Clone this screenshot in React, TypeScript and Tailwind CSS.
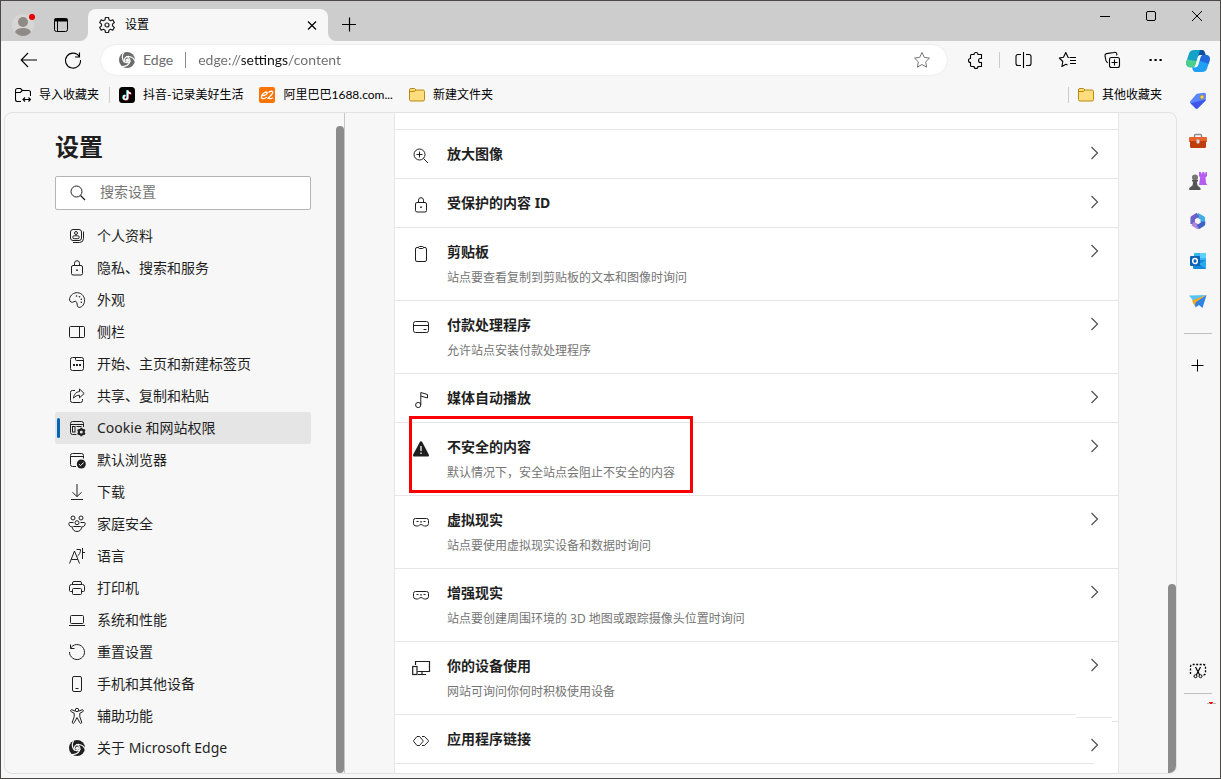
import { ReactNode } from "react";

type IconProps = {
    children: ReactNode
    className?: string
}

function Icon({ children, className = "" }: IconProps) {
    return (
        <svg viewBox="0 0 20 20" fill="none" stroke="currentColor" strokeWidth="1" aria-hidden="true" className={`size-5 shrink-0 ${className}`}>
            {children}
        </svg>
    )
}

function EdgeLogo({ cut }: { cut: string }) {
    return (
        <Icon>
            <circle cx="10" cy="10" r="8" fill="currentColor" stroke="none" />
            <g stroke={cut} strokeWidth="1.2">
                <circle cx="10.3" cy="10.3" r="1.8" fill={cut} stroke="none" />
                <path d="M7.400 12.500C6.200 9 8.600 6.200 12 6.500c2.800.3 5 2 6.200 4.800" />
                <path d="M7.400 12.500C6.200 9 8.600 6.200 12 6.500c2.800.3 5 2 6.200 4.800" transform="rotate(120 10 10)" />
                <path d="M7.400 12.500C6.200 9 8.600 6.200 12 6.500c2.800.3 5 2 6.200 4.800" transform="rotate(240 10 10)" />
            </g>
        </Icon>
    )
}

function LockIcon() {
    return (
        <Icon>
            <rect x="4.5" y="7.5" width="11" height="9.5" rx="1.5" />
            <path d="M7.5 7.5V5.2a2.5 2.5 0 0 1 5 0v2.3" />
            <circle cx="10" cy="12.2" r=".9" fill="currentColor" stroke="none" />
        </Icon>
    )
}

function GogglesIcon() {
    return (
        <Icon>
            <path d="M4.500 6.500h11a2 2 0 0 1 2 2v3a2.500 2.500 0 0 1-2.500 2.500h-1.500c-1.500 0-2-1.500-3.500-1.500S8 14 6.500 14H5a2.500 2.500 0 0 1-2.500-2.500v-3a2 2 0 0 1 2-2z" />
            <path d="M5.5 9.5h2M12.5 9.5h2M9 9.5l1 .8 1-.8" />
        </Icon>
    )
}

function ChevronIcon({ className = "" }: { className?: string }) {
    return (
        <Icon className={`text-[#555555] ${className}`}>
            <path d="M7.5 5l6 6-6 6" strokeWidth="1.3" />
        </Icon>
    )
}

function FolderIcon() {
    return (
        <svg viewBox="0 0 16 16" aria-hidden="true" className="size-4 shrink-0">
            <path d="M.5 3A1.500 1.500 0 0 1 2 1.500h3.500L7 3h7A1.500 1.500 0 0 1 15.500 4.500v8A1.500 1.500 0 0 1 14 14H2A1.500 1.500 0 0 1 .5 12.500z" fill="#ffdc7c" stroke="#b98a12" />
            <path d="M1 4.500h4.500L7 3" fill="#f5c02f" stroke="#b98a12" />
        </svg>
    )
}

const navItems = [
    {
        label: "个人资料",
        icon: (
            <Icon>
                <rect x="3.5" y="3.5" width="11" height="11" rx="2.5" />
                <path d="M16.5 5.5v7a4 4 0 0 1-4 4H6" />
                <circle cx="9" cy="7" r="1.5" />
                <rect x="5.8" y="9.8" width="6.4" height="2.9" rx="1.4" />
            </Icon>
        ),
    },
    { label: "隐私、搜索和服务", icon: <LockIcon /> },
    {
        label: "外观",
        icon: (
            <Icon>
                <path d="M2.6 8.6C3.4 5 6.8 2.4 10.6 2.7c4.600.4 7.400 4.300 6.900 8.600-.4 3.800-3.200 6.400-5.400 6.100-1.800-.2-1.800-1.800-2-3.400-.2-1.700-.8-2.900-2-2.800-.9.1-1.400 1-2.600 1.100-2.100.1-3.400-1.700-2.900-3.700z" />
                <g fill="currentColor" stroke="none">
                    <circle cx="9.5" cy="6" r=".8" />
                    <circle cx="12.5" cy="6.8" r=".8" />
                    <circle cx="14.3" cy="9.3" r=".8" />
                    <circle cx="14.3" cy="12.2" r=".8" />
                </g>
            </Icon>
        ),
    },
    {
        label: "侧栏",
        icon: (
            <Icon>
                <rect x="2.5" y="4.5" width="15" height="11" rx="1" />
                <path d="M12.5 4.5v11" />
            </Icon>
        ),
    },
    {
        label: "开始、主页和新建标签页",
        icon: (
            <Icon>
                <rect x="3.5" y="3.5" width="13" height="13" rx="2" />
                <path d="M8.5 3.5v2a1 1 0 0 0 1 1h7" />
                <path d="M6 11h2M9 11h2M12 11h2" strokeWidth="1.8" />
            </Icon>
        ),
    },
    {
        label: "共享、复制和粘贴",
        icon: (
            <Icon>
                <path d="M8 4.5H5.5a2 2 0 0 0-2 2v8a2 2 0 0 0 2 2h8a2 2 0 0 0 2-2v-1.5" />
                <path d="M12.5 3l4.7 4.5-4.7 4.300V9.300c-2.800 0-4.400.9-6 2.900.3-3.700 2.500-6.400 6-6.600z" strokeLinejoin="round" />
            </Icon>
        ),
    },
    {
        label: "Cookie 和网站权限",
        active: true,
        icon: (
            <Icon>
                <path d="M9.5 16.5h-4a2 2 0 0 1-2-2v-9a2 2 0 0 1 2-2h9a2 2 0 0 1 2 2V9M3.5 6.5h13M9.5 8.5h5" />
                <rect x="5.5" y="8.5" width="2.5" height="5.5" />
                <circle cx="14.3" cy="14" r="2.5" strokeWidth="2" />
                <path d="M14.3 9.7v1.800M14.3 16.5v1.800M10.6 11.8l1.500 1M16.5 15.2l1.500 1M10.6 16.2l1.500-1M16.5 12.8l1.500-1" strokeWidth="1.8" />
            </Icon>
        ),
    },
    {
        label: "默认浏览器",
        icon: (
            <Icon>
                <path d="M9 16.5H5.5a2 2 0 0 1-2-2v-9a2 2 0 0 1 2-2h9a2 2 0 0 1 2 2v3M3.5 6.5h13" />
                <circle cx="14.3" cy="14" r="4.5" fill="currentColor" stroke="none" />
                <path d="M12 14.2l1.600 1.500 3-3.200" stroke="#f7f7f7" />
            </Icon>
        ),
    },
    {
        label: "下载",
        icon: (
            <Icon>
                <path d="M10 2v12.500M5.5 10.2l4.500 4.500 4.500-4.500M4 17.5h12" />
            </Icon>
        ),
    },
    {
        label: "家庭安全",
        icon: (
            <Icon>
                <circle cx="6" cy="4" r="2" />
                <circle cx="14" cy="4" r="2" />
                <circle cx="10" cy="8.7" r="2" />
                <path d="M6.5 8.5H2.8a1 1 0 0 0-1 1c0 2 1.400 3.500 3.500 3.500M13.5 8.500h3.700a1 1 0 0 1 1 1c0 2-1.400 3.500-3.500 3.500" />
                <path d="M6.5 12.5h7a1 1 0 0 1 1 1c0 2.300-2 4-4.500 4s-4.500-1.700-4.500-4a1 1 0 0 1 1-1z" />
            </Icon>
        ),
    },
    {
        label: "语言",
        icon: (
            <Icon>
                <path d="M2.5 17.5L7.5 5l5 12.500M4.2 13.5h6.600" />
                <path d="M9.5 3.5h4c0 3-1 5-3 6.500M15.500 2v11M15.5 6.5H18" />
            </Icon>
        ),
    },
    {
        label: "打印机",
        icon: (
            <Icon>
                <path d="M5.5 6.5V5A1.500 1.500 0 0 1 7 3.5h6A1.500 1.500 0 0 1 14.5 5v1.500M5.5 13.5h-2a1 1 0 0 1-1-1v-4a2 2 0 0 1 2-2h11a2 2 0 0 1 2 2v4a1 1 0 0 1-1 1h-2" />
                <rect x="5.5" y="10.5" width="9" height="6" rx="1" />
            </Icon>
        ),
    },
    {
        label: "系统和性能",
        icon: (
            <Icon>
                <rect x="3.5" y="5.5" width="13" height="8" rx="1" />
                <path d="M2 15.5h16" />
            </Icon>
        ),
    },
    {
        label: "重置设置",
        icon: (
            <Icon>
                <path d="M3.5 2.5v4h4M3.5 6.3A7.500 7.500 0 1 1 2.5 10" />
            </Icon>
        ),
    },
    {
        label: "手机和其他设备",
        icon: (
            <Icon>
                <rect x="5.5" y="2.5" width="9" height="15" rx="1.5" />
                <path d="M8.5 14.5h3" />
            </Icon>
        ),
    },
    {
        label: "辅助功能",
        icon: (
            <Icon>
                <circle cx="10" cy="4" r="1.7" />
                <path d="M8.3 5.2L5 3.800c-1.300-.5-2 1.300-.8 1.900l3 1.500v3.600L5.300 16c-.4 1.300 1.300 1.900 1.900.7L10 11.500l2.800 5.200c.6 1.200 2.300.6 1.900-.7l-1.900-5.200V7.200l3-1.500c1.200-.6.5-2.400-.8-1.900l-3.300 1.400" />
            </Icon>
        ),
    },
    { label: "关于 Microsoft Edge", icon: <EdgeLogo cut="#f7f7f7" /> },
]

const permissions = [
    {
        title: "放大图像",
        icon: (
            <Icon>
                <circle cx="8.5" cy="8.5" r="5.5" />
                <path d="M12.5 12.5l4.500 4.500M5.5 8.500h6M8.500 5.500v6" />
            </Icon>
        ),
    },
    { title: "受保护的内容 ID", icon: <LockIcon /> },
    {
        title: "剪贴板",
        caption: "站点要查看复制到剪贴板的文本和图像时询问",
        icon: (
            <Icon>
                <rect x="4.5" y="3.5" width="11" height="14" rx="1.5" />
                <rect x="7.5" y="2.5" width="5" height="2" rx="1" fill="#ffffff" />
            </Icon>
        ),
    },
    {
        title: "付款处理程序",
        caption: "允许站点安装付款处理程序",
        icon: (
            <Icon>
                <rect x="2.5" y="4.5" width="15" height="11" rx="2" />
                <path d="M2.5 8.5h15M12.5 12.5h3" />
            </Icon>
        ),
    },
    {
        title: "媒体自动播放",
        icon: (
            <Icon>
                <circle cx="7.2" cy="15" r="2.6" />
                <path d="M9.8 15V2.500l6.700 2V8l-6.700-2" />
            </Icon>
        ),
    },
    {
        title: "不安全的内容",
        caption: "默认情况下，安全站点会阻止不安全的内容",
        marked: true,
        icon: (
            <Icon>
                <path d="M8.8 3c.5-.9 1.900-.9 2.400 0l6.700 12.700c.4.800-.2 1.800-1.100 1.800H3.200c-.9 0-1.500-1-1.100-1.800z" fill="currentColor" stroke="none" />
                <path d="M10 7v5M10 13.500v1.500" stroke="#ffffff" strokeWidth="1.3" />
            </Icon>
        ),
    },
    { title: "虚拟现实", caption: "站点要使用虚拟现实设备和数据时询问", icon: <GogglesIcon /> },
    { title: "增强现实", caption: "站点要创建周围环境的 3D 地图或跟踪摄像头位置时询问", icon: <GogglesIcon /> },
    {
        title: "你的设备使用",
        caption: "网站可询问你何时积极使用设备",
        icon: (
            <Icon>
                <path d="M4.5 7V3.500h14v10H6.500M7 16.5h8M11 13.5v3" strokeWidth="1.2" />
                <rect x="1.7" y="8.5" width="4.3" height="8" strokeWidth="1.2" />
            </Icon>
        ),
    },
    {
        title: "应用程序链接",
        last: true,
        icon: (
            <Icon>
                <path d="M6 5.500L2.800 9.300a1 1 0 0 0 0 1.400L6 14.500h2.500l3.300-3.800a1 1 0 0 0 0-1.400L8.500 5.500z" strokeLinejoin="round" />
                <path d="M11 5.500h2.500l3.700 3.800a1 1 0 0 1 0 1.400l-3.700 3.800H11" strokeLinejoin="round" />
            </Icon>
        ),
    },
]

const sideApps = [
    {
        name: "Copilot",
        icon: (
            <svg viewBox="0 0 24 24" aria-hidden="true" className="size-6">
                <path d="M8 1h8c2 0 2.500 1.500 3 3l.6 2H15c-2 0-2.700 1-3.200 2.500L9.500 16c-.5 1.600-1.500 2.200-3 2.200H4c-3 0-4.500-2.500-3.600-5.700L3 4.500C3.700 2.300 5.500 1 8 1z" fill="#13a3c9" />
                <path d="M1 10.500L.4 12.500C-.5 15.700 1 18.200 4 18.200h2.500c1.500 0 2.500-.6 3-2.200l1.200-4z" fill="#4bd08b" />
                <path d="M14 1h2c2 0 2.500 1.500 3 3l.6 2H15c-2 0-2.700 1-3.200 2.500z" fill="#0b4f9e" />
                <path d="M16 23H9.500c-2 0-2.500-1.500-3-3L6 18.200h3c2 0 2.700-1 3.200-2.500l2.300-7.500c.5-1.600 1.500-2.200 3-2.200H20c3 0 4.500 2.500 3.600 5.700L21 19.700c-.7 2.100-2.500 3.300-5 3.300z" fill="#1fa0f3" />
                <path d="M17 6h3c3 0 4.500 2.500 3.600 5.700l-.9 3-9.200-3 1-3.500C15 6.600 16 6 17 6z" fill="#2368dd" />
                <path d="M11.800 8.500c.4-1.300 1-2.200 2.400-2.400h2.300c-1.100.3-1.700 1-2 2.100l-2.300 7.500c-.4 1.400-1.100 2.300-2.600 2.500H7.500c1.100-.3 1.700-1 2-2.200z" fill="#f7f7f7" />
            </svg>
        ),
    },
    {
        name: "购物",
        icon: (
            <svg viewBox="0 0 20 20" aria-hidden="true" className="size-5">
                <path d="M9 2.800l7-1c1 0 2 .8 2 1.800l-.2 5c0 .6-.3 1-.7 1.400l-7.300 7.300c-.7.700-1.600.7-2.300 0l-5-5c-.7-.7-.7-1.700 0-2.400L8 3.500c.3-.4.6-.6 1-.7z" fill="#5a86ff" />
                <path d="M17.800 8.600c0 .6-.3 1-.7 1.400l-7.300 7.300c-.7.7-1.600.7-2.300 0l-5-5z" fill="#3f55ec" />
                <circle cx="14" cy="6" r="2" fill="#f7d154" stroke="#9b8a3c" strokeWidth=".7" />
            </svg>
        ),
    },
    {
        name: "工具",
        icon: (
            <svg viewBox="0 0 20 20" aria-hidden="true" className="size-5">
                <path d="M6.5 6V4.500a1 1 0 0 1 1-1h5a1 1 0 0 1 1 1V6" fill="none" stroke="#8d8d8d" strokeWidth="1.5" />
                <path d="M2 6h16a1 1 0 0 1 1 1v4H1V7a1 1 0 0 1 1-1z" fill="#e9632c" />
                <path d="M2 10h16v5.500a1.500 1.500 0 0 1-1.500 1.500h-13A1.500 1.500 0 0 1 2 15.500z" fill="#bf3c0e" />
                <rect x="8.5" y="8.5" width="3" height="4" rx="1" fill="#d9dde1" />
            </svg>
        ),
    },
    {
        name: "游戏",
        icon: (
            <svg viewBox="0 0 20 20" aria-hidden="true" className="size-5">
                <path d="M11 1h2v1.500h1.200V1h2.100v1.500h1.200V1H19v4l-1.500 1.500.5 5.500 1.200 2H11l1.200-7.500L11 5z" fill="#b65cf2" />
                <circle cx="7" cy="6.5" r="3" fill="#777777" />
                <path d="M4 9h6v1.500H8.800l.7 4L12.500 17v2H1.200v-2l3.300-2.500.7-4H4z" fill="#555555" />
            </svg>
        ),
    },
    {
        name: "Microsoft 365",
        icon: (
            <svg viewBox="0 0 20 20" fill="none" strokeWidth="4.5" strokeLinejoin="round" aria-hidden="true" className="size-5">
                <path d="M9 4l5.800 3.200v4" stroke="#42aee8" />
                <path d="M10 3.800L4.700 7v6" stroke="#6c62c8" />
                <path d="M4.700 12.500l5.300 3.400 2-1.200" stroke="#b183e0" />
                <path d="M15 10.500V13l-5 3" stroke="#3e62c6" />
            </svg>
        ),
    },
    {
        name: "Outlook",
        icon: (
            <svg viewBox="0 0 20 20" aria-hidden="true" className="size-5">
                <rect x="6" y="2" width="12" height="9" rx="1" fill="#38b6f1" />
                <path d="M12 2h5a1 1 0 0 1 1 1v4h-6z" fill="#5fd0fa" />
                <path d="M5 9h13v8a1 1 0 0 1-1 1H6a1 1 0 0 1-1-1z" fill="#1687d9" />
                <path d="M18 9v8.500L11 13z" fill="#2fa9ee" />
                <rect x="2" y="5" width="10" height="10" rx="1" fill="#0a63b6" />
                <ellipse cx="7" cy="10" rx="2.3" ry="2.6" fill="none" stroke="#ffffff" strokeWidth="1.5" />
            </svg>
        ),
    },
    {
        name: "Drop",
        icon: (
            <svg viewBox="0 0 20 20" aria-hidden="true" className="size-5">
                <path d="M1 4.500L18.500 4 5.500 10z" fill="#55c3f5" />
                <path d="M18.500 4l-4 13-3.500-3-3.500 2.500-1-5z" fill="#2e82e6" />
                <path d="M18.500 4L4 9.500 6.500 15l1.500-4z" fill="#f2a51d" />
            </svg>
        ),
    },
]

function TitleBar() {
    return (
        <header className="flex h-10 items-start justify-between bg-[#cdcdcd]">
            <div className="flex h-10 items-end">
                <div className="flex h-8 items-center gap-4 pl-2.5">
                    <button type="button" aria-label="用户" className="relative size-6">
                        <svg viewBox="0 0 24 24" aria-hidden="true" className="size-6">
                            <circle cx="12" cy="12" r="11" fill="#d8d6d2" />
                            <circle cx="12" cy="9" r="5" fill="#8e8b87" />
                            <path d="M4 19c1-2.700 3.500-4 8-4s7 1.300 8 4c-2 2.600-4.800 4-8 4s-6-1.400-8-4z" fill="#8e8b87" />
                        </svg>
                        <span className="absolute top-px right-0 size-1.5 rounded-full bg-[#e60000]" />
                    </button>
                    <button type="button" aria-label="标签页操作" className="text-black">
                        <Icon>
                            <rect x="3.5" y="3.5" width="13" height="13" rx="2" />
                            <path d="M3.5 5h13" strokeWidth="3" />
                            <path d="M6.5 5v11" />
                        </Icon>
                    </button>
                </div>
                <div className="relative ml-[17px] flex h-8 w-60 items-center rounded-t-lg bg-[#f7f7f7] pr-1.5 pl-[9px]">
                    <svg viewBox="0 0 8 8" aria-hidden="true" className="absolute bottom-0 -left-2 size-2">
                        <path d="M8 0v8H0a8 8 0 0 0 8-8z" fill="#f7f7f7" />
                    </svg>
                    <svg viewBox="0 0 8 8" aria-hidden="true" className="absolute -right-2 bottom-0 size-2">
                        <path d="M0 0v8h8a8 8 0 0 1-8-8z" fill="#f7f7f7" />
                    </svg>
                    <Icon>
                        <circle cx="10" cy="10" r="2" strokeWidth="1.2" />
                        <path d="M8.5 2.5h3l.5 2.300 1.500.9 2.300-.8 1.500 2.600-1.800 1.600v1.800l1.800 1.600-1.500 2.600-2.300-.8-1.500.9-.5 2.300h-3L8 15.200l-1.500-.9-2.300.8-1.500-2.600 1.800-1.600V9.100L2.700 7.500l1.500-2.600 2.300.8L8 4.800z" strokeLinejoin="round" strokeWidth="1.2" />
                    </Icon>
                    <span className="ml-2 flex-1 text-xs text-black">设置</span>
                    <button type="button" aria-label="关闭标签页" className="text-black">
                        <Icon><path d="M6 6.500l8 8M14 6.500l-8 8" strokeWidth="1.2" /></Icon>
                    </button>
                </div>
                <button type="button" aria-label="新建标签页" className="ml-[11px] flex h-8 items-center text-black">
                    <Icon><path d="M3 9.500h14M10.500 2.500v14" strokeWidth="1.2" /></Icon>
                </button>
            </div>
            <div className="flex text-black">
                <button type="button" aria-label="最小化" className="flex h-[30px] w-[46px] items-center justify-center">
                    <Icon><path d="M5 10.500h10" /></Icon>
                </button>
                <button type="button" aria-label="最大化" className="flex h-[30px] w-[46px] items-center justify-center">
                    <Icon><rect x="5.5" y="5.5" width="9" height="9" rx="1.5" /></Icon>
                </button>
                <button type="button" aria-label="关闭" className="flex h-[30px] w-[46px] items-center justify-center">
                    <Icon><path d="M5 5l10 10M15 5L5 15" /></Icon>
                </button>
            </div>
        </header>
    )
}

function ToolButton({ label, children }: { label: string, children: ReactNode }) {
    return (
        <button type="button" aria-label={label} className="flex h-8 w-11 shrink-0 items-center justify-center text-black">
            <Icon>{children}</Icon>
        </button>
    )
}

function Toolbar() {
    return (
        <div className="flex h-[38px] items-center pl-1.5">
            <ToolButton label="返回"><path d="M2.5 10H18M9 3l-6.800 7L9 17" strokeWidth="1.1" /></ToolButton>
            <ToolButton label="刷新"><path d="M16.5 2.500V7H12M16.300 6.500A7.500 7.500 0 1 0 17.500 10" strokeWidth="1.1" /></ToolButton>
            <div className="mr-[7px] ml-1.5 flex h-[30px] min-w-0 flex-1 items-center rounded-full bg-white pr-[15px] pl-4 font-['Lato','Noto_Sans_CJK_SC',sans-serif] text-[#6b6b6b] shadow-[0_0_2px_rgba(0,0,0,0.12)]">
                <EdgeLogo cut="#ffffff" />
                <label htmlFor="address" className="ml-1.5 text-sm">Edge</label>
                <span className="mx-3 h-4 w-px bg-[#8a8a8a]" />
                <input id="address" type="text" defaultValue="edge://settings/content" className="min-w-0 flex-1 bg-[linear-gradient(90deg,#6b6b6b_44px,#111111_44px,#111111_91px,#6b6b6b_91px)] bg-clip-text text-sm text-transparent outline-none" />
                <button type="button" aria-label="收藏此页" className="text-[#767676]">
                    <Icon><path d="M10 2.500l2.300 4.900 5.200.7-3.800 3.700.9 5.300-4.600-2.600-4.600 2.600.9-5.300-3.800-3.700 5.200-.7z" strokeLinejoin="round" /></Icon>
                </button>
            </div>
            <ToolButton label="扩展">
                <path d="M5.5 4.500H8a2 2 0 1 1 4 0h3.500v4h-1a2 2 0 1 0 0 4h1v4H12a2 2 0 1 1-4 0H5.500a1 1 0 0 1-1-1v-3a2 2 0 1 1 0-4v-3a1 1 0 0 1 1-1z" strokeWidth="1.1" />
            </ToolButton>
            <span className="mx-px h-4 w-px bg-[#cccccc]" />
            <ToolButton label="分屏">
                <path d="M8 4.500H5a2 2 0 0 0-2 2v7a2 2 0 0 0 2 2h3M13 4.500h3a2 2 0 0 1 2 2v7a2 2 0 0 1-2 2h-3M10.500 2v16" strokeWidth="1.1" />
            </ToolButton>
            <ToolButton label="收藏夹">
                <path d="M12.5 7.500L11 7.300 8.800 2.500 6.500 7.300l-4.200.7 3.500 3.500-.9 5 4-2.300 1.600.9M13 7.500h6M13 10.500h6M13 13.500h6" strokeWidth="1.1" strokeLinejoin="round" />
            </ToolButton>
            <ToolButton label="集锦">
                <rect x="8.5" y="7.5" width="10" height="10" rx="2" strokeWidth="1.1" />
                <path d="M13.5 9.500v6M10.500 12.500h6M15.500 5.500a2 2 0 0 0-2.500-3L5.500 3.600A2 2 0 0 0 4 5.900l.8 4.100c.2 1.200 1 2.300 2 2.800" strokeWidth="1.1" />
            </ToolButton>
            <ToolButton label="设置及其他">
                <path d="M4.5 10h2.200M9.500 10h2.200M14.500 10h2.200" strokeWidth="2.2" />
            </ToolButton>
        </div>
    )
}

function Bookmarks() {
    return (
        <nav className="flex h-[33px] items-center pr-[15px] pb-0.5 pl-3.5 font-['Lato','Noto_Sans_CJK_SC',sans-serif] text-xs whitespace-nowrap text-black">
            <a href="#import" className="flex items-center gap-2">
                <svg viewBox="0 0 16 16" fill="none" stroke="currentColor" strokeWidth="1.1" aria-hidden="true" className="size-4">
                    <path d="M6 14.500H2.500a2 2 0 0 1-2-2v-9a2 2 0 0 1 2-2h3l2 2h6a2 2 0 0 1 2 2V9M.5 5.500h4.800l2-2M8 12.500h7.500M10 10.500l-2 2 2 2M13.500 10.500l2 2-2 2" />
                </svg>
                导入收藏夹
            </a>
            <span className="mr-[9px] ml-2.5 h-4 w-px bg-[#cccccc]" />
            <a href="#douyin" className="flex items-center gap-2">
                <svg viewBox="0 0 16 16" fill="none" aria-hidden="true" className="size-4">
                    <rect width="16" height="16" rx="3.5" fill="#000000" />
                    <path d="M8 3v7.200a2 2 0 1 1-2-2M8 3.500c.3 1.700 1.500 2.700 3.500 2.800" stroke="#25f4ee" strokeWidth="1.6" />
                    <path d="M9.2 3.500v7.200a2 2 0 1 1-2-2M9.200 4c.3 1.700 1.500 2.700 3.300 2.800" stroke="#fe2c55" strokeWidth="1.6" />
                    <path d="M8.6 3.200v7.200a2 2 0 1 1-2-2M8.600 3.700c.3 1.700 1.500 2.700 3.400 2.800" stroke="#ffffff" strokeWidth="1.5" />
                </svg>
                抖音-记录美好生活
            </a>
            <a href="#1688" className="ml-4 flex items-center gap-2">
                <svg viewBox="0 0 16 16" fill="none" stroke="#ffffff" aria-hidden="true" className="size-4">
                    <rect width="16" height="16" rx="2" fill="#ff7300" stroke="none" />
                    <path d="M3 8.500c3 .2 5.500-1.200 5.200-3-.8-1.300-5 .5-5.700 4-.2 2.800 2.500 2.500 5.500.8M9.500 5.500c1.500-1.500 4.300-1.800 4.300-.2 0 1.700-2.300 3.400-4.800 6 1.500.8 3.200.4 5-.6" strokeWidth="1.3" />
                </svg>
                阿里巴巴1688.com...
            </a>
            <a href="#new-folder" className="ml-4 flex items-center gap-2"><FolderIcon />新建文件夹</a>
            <span className="ml-auto h-4 w-px bg-[#cccccc]" />
            <a href="#other" className="ml-[9px] flex items-center gap-2"><FolderIcon />其他收藏夹</a>
        </nav>
    )
}

function SettingsNav() {
    return (
        <aside className="flex w-[340px] shrink-0 justify-between border-r border-[#c6c6c6] pl-[50px]">
            <div className="w-64">
                <h1 className="mt-[18px] text-2xl leading-8 font-bold">设置</h1>
                <div className="mt-[13px] flex h-[34px] items-center gap-3 rounded-xs border border-[#b5b5b5] bg-white pl-3">
                    <label htmlFor="search" aria-label="搜索设置">
                        <Icon><circle cx="8.5" cy="8.5" r="5.5" /><path d="M12.5 12.500l4.500 4.500" strokeWidth="1.2" /></Icon>
                    </label>
                    <input id="search" type="search" placeholder="搜索设置" className="min-w-0 flex-1 pb-0.5 text-sm outline-none placeholder:text-[#757575]" />
                </div>
                <ul className="mt-2.5">
                    {navItems.map((item) => (
                        <li key={item.label}>
                            <a href="#settings" className={item.active ? "relative flex h-8 items-center gap-2.5 rounded-xs bg-[#e5e5e5] pl-3 text-sm" : "flex h-8 items-center gap-2.5 pl-3 text-sm"}>
                                {item.active && <span className="absolute inset-y-1.5 left-0.5 w-[3px] rounded-full bg-[#0067b8]" />}
                                {item.icon}
                                {item.label}
                            </a>
                        </li>
                    ))}
                </ul>
            </div>
            <div className="mt-[13px] w-2 rounded-full bg-[#8b8b8b]" />
        </aside>
    )
}

function PermissionList() {
    return (
        <main className="flex min-w-0 flex-1 items-start">
            <div className="mx-[49px] min-w-0 flex-1 border-x border-[#e6e6e6] bg-white pt-4 pb-8">
                {permissions.map((item) => (
                    <section key={item.title} className="relative">
                        {item.last ? (
                            <div className="flex h-px">
                                <span className="h-px flex-1 bg-[#e6e6e6]" />
                                <span className="mt-[3px] h-px w-9 bg-[#e6e6e6]" />
                                <span className="mt-[7px] h-px w-1.5 bg-[#e6e6e6]" />
                            </div>
                        ) : (
                            <div className="h-px bg-[#e6e6e6]" />
                        )}
                        <button type="button" className={`flex w-full items-start gap-4 pt-3 pr-3.5 pl-4 text-left ${item.caption ? "pb-2" : "pb-3"}`}>
                            <span className="mt-1 -mb-1">{item.icon}</span>
                            <span className="flex min-w-0 flex-1 flex-col">
                                <span className="text-sm leading-6 font-bold">{item.title}</span>
                                {item.caption && <span className="text-xs leading-7 text-[#757575]">{item.caption}</span>}
                            </span>
                            <ChevronIcon className={item.last ? "mt-[7px] -mb-2" : ""} />
                        </button>
                        {item.marked && <span className="absolute -top-1.5 left-3.5 z-10 h-[77px] w-[284px] border-[3px] border-[#fa0000]" />}
                    </section>
                ))}
                <div className="mr-6 h-px bg-[#e6e6e6]" />
            </div>
            <div className="mt-[471px] w-2 self-stretch rounded-t-full bg-[#8b8b8b]" />
        </main>
    )
}

function Sidebar() {
    return (
        <aside className="flex w-[43px] shrink-0 flex-col items-center pr-0.5">
            {sideApps.map((app) => (
                <button key={app.name} type="button" aria-label={app.name} className="flex h-10 items-center">{app.icon}</button>
            ))}
            <hr className="my-3 w-7 border-[#c0c0c0]" />
            <button type="button" aria-label="自定义" className="flex h-10 items-center text-black">
                <Icon><path d="M3.5 9.500h12M9.500 3.500v12" /></Icon>
            </button>
            <button type="button" aria-label="屏幕截图" className="mt-auto text-black">
                <Icon>
                    <path d="M2.5 13V5.500a2 2 0 0 1 2-2h11a2 2 0 0 1 2 2V12a2 2 0 0 1-2 2" strokeWidth="1.3" strokeDasharray="2 1.5" />
                    <path d="M7.5 6l4.200 8M12.500 6l-4.200 8" strokeWidth="1.2" />
                    <circle cx="7.5" cy="15.2" r="1.5" />
                    <circle cx="12.5" cy="15.2" r="1.5" />
                </Icon>
            </button>
            <hr className="mt-3 w-7 border-[#c0c0c0]" />
            <svg viewBox="0 0 10 3" aria-hidden="true" className="mt-2 mr-0.5 mb-[73px] h-[3px] w-2.5 shrink-0 self-end">
                <path d="M1 1.500h9" stroke="#b8b8b8" />
                <path d="M3 .5h4M4 1.500h2" stroke="#f01010" />
            </svg>
        </aside>
    )
}

export default function App() {
    return (
        <div className="flex h-screen w-full flex-col overflow-hidden border border-[#4d4848] bg-[#f7f7f7] font-['Noto_Sans','Noto_Sans_CJK_SC',sans-serif] text-[#1f1f1f]">
            <TitleBar />
            <div className="flex min-h-0 flex-1">
                <div className="flex min-w-0 flex-1 flex-col">
                    <Toolbar />
                    <Bookmarks />
                    <div className="mb-1 ml-[3px] flex min-h-0 flex-1 overflow-hidden rounded-lg border border-[#e2e2e2]">
                        <SettingsNav />
                        <PermissionList />
                    </div>
                </div>
                <Sidebar />
            </div>
        </div>
    )
}
